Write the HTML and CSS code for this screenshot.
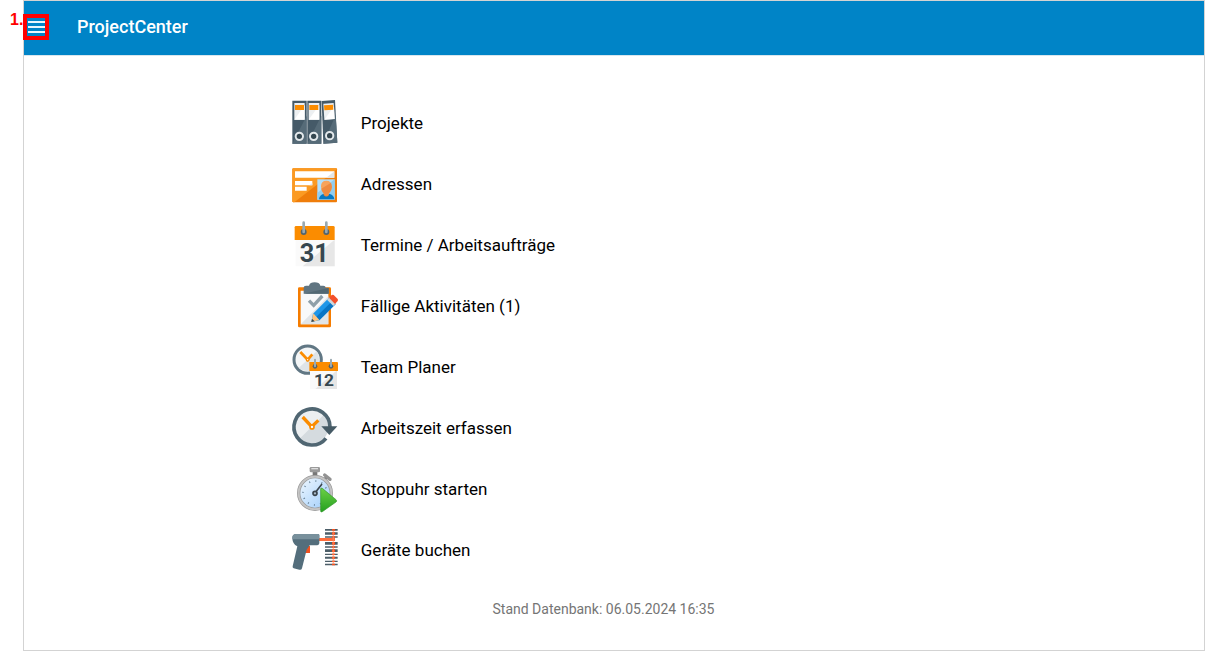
FILE: index.html
```html
<!DOCTYPE html>
<html lang="de">
<head>
    <meta charset="UTF-8">
    <meta name="viewport" content="width=device-width, initial-scale=1.0">
    <title>ProjectCenter</title>
    <link rel="stylesheet" href="styles.css">
</head>
<body>
    <div class="marker">1.</div>
    <div class="app">
        <header class="topbar">
            <button class="menu-button" type="button" aria-label="Menü">
                <svg width="18" height="18" viewBox="0 0 18 18"><path d="M1 4h17M1 9h17M1 14h17" stroke="#e8f6fd" stroke-width="2"/></svg>
            </button>
            <h1>ProjectCenter</h1>
        </header>

        <main>
            <nav class="menu">
                <a href="#projekte">
                    <svg class="icon" viewBox="0 0 180 168">
                        <path d="M22 17h43v129H22zM67 17h42v129H67z" fill="#455a68"/>
                        <path d="M110 18l40-3 7 128-42 3z" fill="#455a68"/>
                        <path d="M65 62v84H22zM109 62v84H67z" fill="#566b78"/>
                        <path d="M152 60l5 83-42 3z" fill="#566b78"/>
                        <path d="M28 24h31v50H28zM71 24h32v50H71zM115 26l31-2 3 48-31 2z" fill="#eceff1"/>
                        <path d="M59 30v44H28zM103 30v44H71zM147 34l2 38-31 2z" fill="#fff"/>
                        <path d="M30 30h27v15H30zM73 30h27v15H73zM117 31l27-2 1 15-27 2z" fill="#fb8c00"/>
                        <g fill="#34464f" stroke="#e3e8eb" stroke-width="6">
                            <circle cx="43" cy="124" r="11"/>
                            <circle cx="86" cy="124" r="11"/>
                            <circle cx="134" cy="122" r="11"/>
                        </g>
                    </svg>
                    <span>Projekte</span>
                </a>
                <a href="#adressen">
                    <svg class="icon" viewBox="0 -13 180 168">
                        <rect x="22" y="24" width="134" height="102" rx="3" fill="#ef7d0a"/>
                        <path d="M25 24h128q3 0 3 3L28 126h-3q-3 0-3-3V27q0-3 3-3z" fill="#fb9a22"/>
                        <path d="M30 33h118v19H30zM30 62h52v13H30zM30 79h35v12H30z" fill="#fff"/>
                        <path d="M148 33v19h-24zM82 68v7h-9z" fill="#e3e6e8"/>
                        <path d="M97 57h52v61H97z" fill="#b3e0fa"/>
                        <path d="M149 57v61H97v-20z" fill="#90cdf0"/>
                        <path d="M102 117q1-14 15-17h15q15 3 16 17z" fill="#0679c4"/>
                        <path d="M116 92h16v12q-8 9-16 0z" fill="#f08a3c"/>
                        <path d="M108 78q0-17 16-17t16 17q-1 22-16 25-15-3-16-25z" fill="#f7a35b"/>
                        <path d="M138 67q9 24-14 36-11-3-15-18z" fill="#ee8a3f"/>
                    </svg>
                    <span>Adressen</span>
                </a>
                <a href="#termine">
                    <svg class="icon" viewBox="0 0 180 168">
                        <path d="M32 68h117v80H32z" fill="#fafafa"/>
                        <path d="M149 68v80H53z" fill="#e7e7e7"/>
                        <path d="M33 27h112q4 0 4 4v38H29V31q0-4 4-4z" fill="#fb8c00"/>
                        <circle cx="56" cy="45" r="9" fill="#53646e"/>
                        <circle cx="124" cy="45" r="9" fill="#53646e"/>
                        <path d="M56 17v28M124 17v28" stroke="#9aa9b1" stroke-width="8" stroke-linecap="round"/>
                        <text class="day" x="88" y="135" font-size="76">31</text>
                    </svg>
                    <span>Termine / Arbeitsaufträge</span>
                </a>
                <a href="#aktivitaeten">
                    <svg class="icon" viewBox="0 0 180 168">
                        <rect x="39" y="28" width="99" height="120" rx="4" fill="#f57c00"/>
                        <path d="M47 38h83v101H47z" fill="#f8f9fa"/>
                        <path d="M130 55v84H47z" fill="#e1e5e8"/>
                        <path d="M56 47V29q0-6 7-6h9q3-10 17-10t17 10h9q7 0 7 6l9 0v18z" fill="#607581"/>
                        <path d="M131 30v17H56z" fill="#526873"/>
                        <path d="M72 68l14 14 26-28" fill="none" stroke="#8fa0a9" stroke-width="10"/>
                        <path d="M79 132l5-25L132 59l20 19-49 49z" fill="#1e96e8"/>
                        <path d="M91 119l51-50 10 9-49 49z" fill="#0875c5"/>
                        <path d="M79 132l6-26 18 20z" fill="#ffc37d"/>
                        <path d="M79 132l2-10 8 8z" fill="#34464f"/>
                        <path d="M126 65l8-8 19 19-8 8z" fill="#cfd8dc"/>
                        <path d="M132 59l8-8q3-2 6 0l12 12q2 3 0 6l-8 9z" fill="#f4512c"/>
                    </svg>
                    <span>Fällige Aktivitäten (1)</span>
                </a>
                <a href="#teamplaner">
                    <svg class="icon" viewBox="0 0 180 168">
                        <circle cx="68" cy="62" r="41" fill="#f4f6f7" stroke="#617784" stroke-width="9"/>
                        <path d="M95 37a37 37 0 0 1-54 50z" fill="#dfe4e7"/>
                        <path d="M46 39l22 23 14-16" fill="none" stroke="#fb8c00" stroke-width="8"/>
                        <circle cx="68" cy="62" r="4" fill="#fff" stroke="#fb8c00" stroke-width="4"/>
                        <path d="M75 94h81v56H75z" fill="#fafafa"/>
                        <path d="M156 94v56H91z" fill="#e6e6e6"/>
                        <path d="M73 69h83q3 0 3 3v24H73z" fill="#fb8c00"/>
                        <circle cx="90" cy="82" r="7" fill="#53646e"/>
                        <circle cx="138" cy="82" r="7" fill="#53646e"/>
                        <path d="M90 62v20M138 62v20" stroke="#9aa9b1" stroke-width="6" stroke-linecap="round"/>
                        <text class="day" x="117" y="142" font-size="52">12</text>
                    </svg>
                    <span>Team Planer</span>
                </a>
                <a href="#arbeitszeit">
                    <svg class="icon" viewBox="0 0 180 168">
                        <circle cx="80" cy="81" r="50" fill="#eceff1"/>
                        <path d="M116 45a50 50 0 0 1-72 71z" fill="#d5dbdf"/>
                        <path d="M135 81a54 54 0 1 0-12 34" fill="none" stroke="#506672" stroke-width="11"/>
                        <path d="M109 79h48l-24 26z" fill="#455a65"/>
                        <path d="M53 51l27 29 20-19" fill="none" stroke="#fb8c00" stroke-width="10"/>
                        <circle cx="81" cy="81" r="6" fill="#fff" stroke="#fb8c00" stroke-width="5"/>
                    </svg>
                    <span>Arbeitszeit erfassen</span>
                </a>
                <a href="#stoppuhr">
                    <svg class="icon" viewBox="0 0 180 168">
                        <defs>
                            <linearGradient id="face" x1="0" y1="0" x2="1" y2="1">
                                <stop offset="0" stop-color="#f2f9ff"/>
                                <stop offset="1" stop-color="#9ccbfa"/>
                            </linearGradient>
                            <linearGradient id="play" x1="0" y1="0" x2="0" y2="1">
                                <stop offset="0" stop-color="#6cd046"/>
                                <stop offset="1" stop-color="#25a020"/>
                            </linearGradient>
                        </defs>
                        <path d="M83 31h14v18H83z" fill="#777"/>
                        <rect x="74" y="18" width="31" height="16" rx="4" fill="#9a9a9a"/>
                        <path d="M79 23h20" stroke="#dedede" stroke-width="4"/>
                        <path d="M117 57l9-10" stroke="#777" stroke-width="9"/>
                        <path d="M119 42l16 13" stroke="#929292" stroke-width="10" stroke-linecap="round"/>
                        <circle cx="90" cy="96" r="49" fill="url(#face)" stroke="#999" stroke-width="10"/>
                        <circle cx="90" cy="96" r="49" fill="none" stroke="#c4c4c4" stroke-width="6"/>
                        <circle cx="90" cy="96" r="36" fill="none" stroke="#668097" stroke-width="5" stroke-dasharray="3 15.85"/>
                        <path d="M88 98l23-29" stroke="#3b454e" stroke-width="5"/>
                        <circle cx="90" cy="97" r="6" fill="#a8b8c5" stroke="#39434b" stroke-width="5"/>
                        <path d="M107 84q0-5 5-2l41 34q4 4 0 7l-41 29q-5 3-5-2z" fill="url(#play)" stroke="#32972a" stroke-width="2"/>
                    </svg>
                    <span>Stoppuhr starten</span>
                </a>
                <a href="#geraete">
                    <svg class="icon" viewBox="0 0 180 168">
                        <path d="M120 21h38v5h-38zM120 31h38v7h-38zM120 43h38v4h-38zM120 60h38v8h-38zM120 73h38v4h-38zM120 82h38v8h-38zM120 95h38v4h-38zM120 104h38v6h-38zM120 116h38v4h-38zM120 125h38v5h-38z" fill="#4c5e68"/>
                        <path d="M141 21h9v5h-9zM141 31h9v7h-9zM141 43h9v4h-9zM141 60h9v8h-9zM141 73h9v4h-9zM141 82h9v8h-9zM141 95h9v4h-9zM141 104h9v6h-9zM141 116h9v4h-9zM141 125h9v5h-9z" fill="#f4511e"/>
                        <path d="M101 48h49v9h-49z" fill="#ff6d3c"/>
                        <path d="M143 26h4v99h-4z" fill="#ff8a65" opacity=".6"/>
                        <path d="M62 72h13v21H60z" fill="#f4511e"/>
                        <path d="M22 47q0-11 11-11h66q4 0 4 4v24q0 5-6 6H74l-9 13-14 56q-2 6-8 4l-17-4q-4-2-3-6l14-60q-15-8-15-26z" fill="#546e7c"/>
                        <path d="M22 50q0-14 11-14h66q4 0 4 4v12H22z" fill="#78909c"/>
                    </svg>
                    <span>Geräte buchen</span>
                </a>
            </nav>
            <p class="status">Stand Datenbank: 06.05.2024 16:35</p>
        </main>
    </div>
</body>
</html>
```

FILE: styles.css
```css
* {
    box-sizing: border-box;
}
body {
    margin: 0;
    display: flex;
    min-height: 100vh;
    background-color: #fff;
    font-family: Roboto, sans-serif;
    color: #111;
}
.marker {
    width: 23px;
    padding: 10px 0 0 10px;
    font-family: "Liberation Sans", Arial, sans-serif;
    font-size: 16px;
    line-height: 20px;
    font-weight: bold;
    color: #f00;
}
.app {
    flex: 1;
    border: 1px solid #d3d3d3;
}
.topbar {
    display: flex;
    align-items: center;
    height: 54px;
    padding-bottom: 3px;
    gap: 28px;
    background-color: #0084c7;
    color: #fff;
}
.topbar h1 {
    margin: 0;
    font-size: 18px;
    line-height: 24px;
    font-weight: 500;
}
.menu-button {
    display: flex;
    width: 26px;
    height: 26px;
    margin-left: -1px;
    padding: 0;
    border: 4px solid #f00;
    background: none;
    cursor: pointer;
}
main {
    padding: 36px 21px 0 0;
    border-top: 1px solid #d8e6ee;
}
.menu {
    width: 55%;
    margin: 0 auto;
}
.menu a {
    display: flex;
    align-items: center;
    gap: 16px;
    height: 61px;
    font-size: 17px;
    line-height: 24px;
    color: #000;
    text-decoration: none;
}
.icon {
    width: 60px;
    height: 56px;
}
.day {
    font-weight: bold;
    text-anchor: middle;
    fill: #37474f;
}
.status {
    margin: 19px 0 0;
    text-align: center;
    font-size: 14px;
    line-height: 20px;
    color: #757575;
}
```
